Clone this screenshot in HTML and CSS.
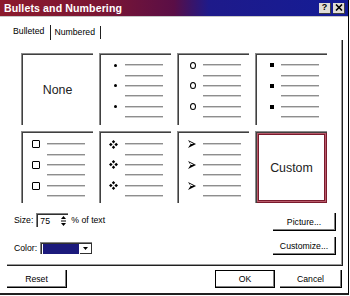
FILE: index.html
```html
<!DOCTYPE html>
<html>
<head>
<meta charset="utf-8">
<link rel="stylesheet" href="styles.css">
</head>
<body>
<div class="window">
  <div class="titlebar">
    <span class="title">Bullets and Numbering</span>
    <div class="tbtns">
      <span class="tbtn">?</span>
      <span class="tbtn">
        <svg width="8" height="7" viewBox="0 0 8 7"><path d="M1 0.5 L7 6.5 M7 0.5 L1 6.5" stroke="#000" stroke-width="1.6"/></svg>
      </span>
    </div>
  </div>
  <div class="tabs">
    <span class="tab active">Bulleted</span>
    <span class="tab">Numbered</span>
  </div>
  <div class="panel">
    <div class="grid">
      <div class="cell center big">None</div>
      <div class="cell list">
        <div class="item"><span class="slot"><i class="dot"></i></span><span class="bar"></span></div>
        <div class="item"><span class="slot"></span><span class="bar"></span></div>
        <div class="item"><span class="slot"><i class="dot"></i></span><span class="bar"></span></div>
        <div class="item"><span class="slot"></span><span class="bar"></span></div>
        <div class="item"><span class="slot"><i class="dot"></i></span><span class="bar"></span></div>
        <div class="item"><span class="slot"></span><span class="bar"></span></div>
      </div>
      <div class="cell list">
        <div class="item"><span class="slot"><i class="ring"></i></span><span class="bar"></span></div>
        <div class="item"><span class="slot"></span><span class="bar"></span></div>
        <div class="item"><span class="slot"><i class="ring"></i></span><span class="bar"></span></div>
        <div class="item"><span class="slot"></span><span class="bar"></span></div>
        <div class="item"><span class="slot"><i class="ring"></i></span><span class="bar"></span></div>
        <div class="item"><span class="slot"></span><span class="bar"></span></div>
      </div>
      <div class="cell list">
        <div class="item"><span class="slot"><i class="sq"></i></span><span class="bar"></span></div>
        <div class="item"><span class="slot"></span><span class="bar"></span></div>
        <div class="item"><span class="slot"><i class="sq"></i></span><span class="bar"></span></div>
        <div class="item"><span class="slot"></span><span class="bar"></span></div>
        <div class="item"><span class="slot"><i class="sq"></i></span><span class="bar"></span></div>
        <div class="item"><span class="slot"></span><span class="bar"></span></div>
      </div>
      <div class="cell list row2">
        <div class="item"><span class="slot"><i class="box"></i></span><span class="bar"></span></div>
        <div class="item"><span class="slot"></span><span class="bar"></span></div>
        <div class="item"><span class="slot"><i class="box"></i></span><span class="bar"></span></div>
        <div class="item"><span class="slot"></span><span class="bar"></span></div>
        <div class="item"><span class="slot"><i class="box"></i></span><span class="bar"></span></div>
        <div class="item"><span class="slot"></span><span class="bar"></span></div>
      </div>
      <div class="cell list row2">
        <div class="item"><span class="slot"><svg class="ico" width="9" height="9" viewBox="0 0 9 9"><path d="M4.5 0 L6.2 1.8 L4.5 3.6 L2.8 1.8Z M4.5 5.4 L6.2 7.2 L4.5 9 L2.8 7.2Z M1.8 2.8 L3.6 4.5 L1.8 6.2 L0 4.5Z M7.2 2.8 L9 4.5 L7.2 6.2 L5.4 4.5Z" fill="#000"/></svg></span><span class="bar"></span></div>
        <div class="item"><span class="slot"></span><span class="bar"></span></div>
        <div class="item"><span class="slot"><svg class="ico" width="9" height="9" viewBox="0 0 9 9"><path d="M4.5 0 L6.2 1.8 L4.5 3.6 L2.8 1.8Z M4.5 5.4 L6.2 7.2 L4.5 9 L2.8 7.2Z M1.8 2.8 L3.6 4.5 L1.8 6.2 L0 4.5Z M7.2 2.8 L9 4.5 L7.2 6.2 L5.4 4.5Z" fill="#000"/></svg></span><span class="bar"></span></div>
        <div class="item"><span class="slot"></span><span class="bar"></span></div>
        <div class="item"><span class="slot"><svg class="ico" width="9" height="9" viewBox="0 0 9 9"><path d="M4.5 0 L6.2 1.8 L4.5 3.6 L2.8 1.8Z M4.5 5.4 L6.2 7.2 L4.5 9 L2.8 7.2Z M1.8 2.8 L3.6 4.5 L1.8 6.2 L0 4.5Z M7.2 2.8 L9 4.5 L7.2 6.2 L5.4 4.5Z" fill="#000"/></svg></span><span class="bar"></span></div>
        <div class="item"><span class="slot"></span><span class="bar"></span></div>
      </div>
      <div class="cell list row2">
        <div class="item"><span class="slot"><svg class="ico" width="8" height="8" viewBox="0 0 8 8"><path d="M0 0 L8 4 L0 8 L2.6 4Z" fill="#000"/><path d="M1.6 1.6 L5.6 4 L2.6 4Z" fill="#fff"/></svg></span><span class="bar"></span></div>
        <div class="item"><span class="slot"></span><span class="bar"></span></div>
        <div class="item"><span class="slot"><svg class="ico" width="8" height="8" viewBox="0 0 8 8"><path d="M0 0 L8 4 L0 8 L2.6 4Z" fill="#000"/><path d="M1.6 1.6 L5.6 4 L2.6 4Z" fill="#fff"/></svg></span><span class="bar"></span></div>
        <div class="item"><span class="slot"></span><span class="bar"></span></div>
        <div class="item"><span class="slot"><svg class="ico" width="8" height="8" viewBox="0 0 8 8"><path d="M0 0 L8 4 L0 8 L2.6 4Z" fill="#000"/><path d="M1.6 1.6 L5.6 4 L2.6 4Z" fill="#fff"/></svg></span><span class="bar"></span></div>
        <div class="item"><span class="slot"></span><span class="bar"></span></div>
      </div>
      <div class="cell center big selected">Custom</div>
    </div>
    <div class="options">
      <div class="opts-left">
        <div class="row">
          <span class="lbl">Size:</span>
          <div class="spin">
            <span class="spin-val">75</span>
            <span class="spin-btn">
              <svg width="7" height="12" viewBox="0 0 7 12"><path d="M3.5 1 L6 4 L1 4Z" fill="#000"/><path d="M1 6 L6 6" stroke="#000" stroke-width="1"/><path d="M1 8 L6 8 L3.5 11Z" fill="#000"/></svg>
            </span>
          </div>
          <span class="lbl">% of text</span>
        </div>
        <div class="row color-row">
          <span class="lbl">Color:</span>
          <div class="colorpick">
            <span class="swatch"></span>
            <span class="drop"><svg width="5" height="3" viewBox="0 0 5 3"><path d="M0 0 L5 0 L2.5 3Z" fill="#000"/></svg></span>
          </div>
        </div>
      </div>
      <div class="opts-right">
        <div class="btn wide">Picture...</div>
        <div class="btn wide">Customize...</div>
      </div>
    </div>
  </div>
  <div class="footer">
    <div class="btn fbtn reset">Reset</div>
    <div class="spacer"></div>
    <div class="btn fbtn default">OK</div>
    <div class="btn fbtn cancel">Cancel</div>
  </div>
</div>
</body>
</html>
```
FILE: styles.css
```css
* { box-sizing: border-box; }
html, body { margin: 0; padding: 0; background: #fff; }
body {
  width: 350px;
  height: 296px;
  overflow: hidden;
  font-family: "Liberation Sans", Arial, sans-serif;
  font-size: 8.7px;
  color: #000;
}
.window {
  width: 349px;
  height: 295px;
  border-right: 1px solid #000;
  border-bottom: 2px solid #202020;
  display: flex;
  flex-direction: column;
}
.titlebar {
  height: 17px;
  flex: none;
  display: flex;
  align-items: center;
  padding: 0 3px 0 4px;
  border-bottom: 1px solid #c8c8c8;
  background: linear-gradient(to right, #8c1a2c 0%, #7a1634 30%, #5a0e46 50%, #3a1468 55%, #1e1a8a 60%, #141c96 100%);
}
.title {
  flex: 1;
  color: #fff;
  font-weight: bold;
  font-size: 10.6px;
  letter-spacing: 0.1px;
}
.tbtns { display: flex; gap: 2px; }
.tbtn {
  width: 12px;
  height: 11px;
  background: #e0ddd6;
  border-right: 1px solid #404040;
  border-bottom: 1px solid #404040;
  display: flex;
  align-items: center;
  justify-content: center;
  font-weight: bold;
  font-size: 9px;
  line-height: 1;
}
.tabs {
  height: 23px;
  flex: none;
  display: flex;
  align-items: flex-end;
  padding-left: 9px;
}
.tab {
  height: 13px;
  margin-bottom: 1px;
  padding: 0 5px 0 3px;
  border-right: 1px solid #202020;
  line-height: 13px;
}
.tab.active {
  height: 15px;
  margin-bottom: 0;
  padding: 0 6px 0 4px;
  line-height: 13px;
}
.panel {
  margin-left: 7px;
  width: 336px;
  flex: none;
  padding: 13px 6px 10px 14px;
  border-right: 1px solid #202020;
  border-bottom: 1px solid #202020;
  box-shadow: inset -1px -1px 0 #9a9a9a;
}
.grid {
  display: grid;
  grid-template-columns: repeat(4, 72px);
  grid-template-rows: 72px 72px;
  column-gap: 6px;
  row-gap: 6px;
}
.cell {
  border-top: 1px solid #8a8a8a;
  border-left: 1px solid #8a8a8a;
  box-shadow: inset 1px 1px 0 #404040;
}
.center {
  display: flex;
  align-items: center;
  justify-content: center;
}
.big { font-size: 12.4px; color: #222; }
.selected {
  box-shadow: inset 1px 1px 0 #404040, inset 0 0 0 1px #7a1a2c, inset 0 0 0 2px #b85a6a, inset 0 0 0 3px #7a1a2c;
}
.list {
  display: flex;
  flex-direction: column;
  padding-top: 6px;
  padding-left: 1px;
}
.list.row2 { padding-top: 7px; }
.item {
  height: 10.4px;
  display: flex;
  align-items: center;
}
.slot {
  width: 24px;
  padding-right: 7px;
  display: flex;
  justify-content: flex-end;
  align-items: center;
}
.bar {
  width: 38px;
  height: 2px;
  border-top: 1px solid #8e8e8e;
  background: #cfcfcf;
}
.dot {
  display: block;
  width: 3px;
  height: 3px;
  border-radius: 50%;
  background: #000;
  margin-right: 1px;
}
.ring {
  display: block;
  width: 6px;
  height: 7px;
  border: 1px solid #000;
  border-radius: 50%;
}
.sq {
  display: block;
  width: 4px;
  height: 4px;
  background: #000;
}
.box {
  display: block;
  width: 8px;
  height: 8px;
  border: 1.5px solid #000;
  border-radius: 1px;
}
.ico { display: block; }
.options {
  margin-top: 10px;
  display: flex;
  justify-content: space-between;
}
.opts-left {
  margin-left: -7px;
  display: flex;
  flex-direction: column;
}
.row {
  height: 14px;
  display: flex;
  align-items: center;
  gap: 3px;
}
.color-row { margin-top: 15px; height: 12px; }
.spin {
  width: 32px;
  height: 14px;
  border-top: 1px solid #808080;
  border-left: 1px solid #808080;
  box-shadow: inset 1px 1px 0 #303030;
  display: flex;
  align-items: center;
  justify-content: space-between;
  padding: 0 1px 0 3px;
}
.spin-btn { display: flex; }
.colorpick {
  width: 52px;
  height: 12px;
  border-top: 1px solid #808080;
  border-left: 1px solid #808080;
  box-shadow: inset 1px 1px 0 #303030;
  display: flex;
  align-items: stretch;
  padding: 1px 0 0 2px;
  gap: 1px;
}
.swatch {
  width: 36px;
  background: #1c1a7c;
}
.drop {
  width: 12px;
  border-right: 1px solid #303030;
  border-bottom: 1px solid #303030;
  display: flex;
  align-items: center;
  justify-content: center;
}
.opts-right {
  display: flex;
  flex-direction: column;
  gap: 6px;
}
.btn {
  display: flex;
  align-items: center;
  justify-content: center;
  border-right: 1px solid #000;
  border-bottom: 1px solid #000;
  box-shadow: inset -1px -1px 0 #808080;
}
.btn.wide { width: 63px; height: 18px; }
.footer {
  flex: 1;
  display: flex;
  align-items: flex-start;
  padding: 4px 6px 0 7px;
}
.fbtn { width: 60px; height: 18px; }
.spacer { flex: 1; }
.default {
  border: 1px solid #000;
  box-shadow: inset -1px -1px 0 #808080;
  margin-right: 5px;
}
.cancel { width: 62px; }
```
